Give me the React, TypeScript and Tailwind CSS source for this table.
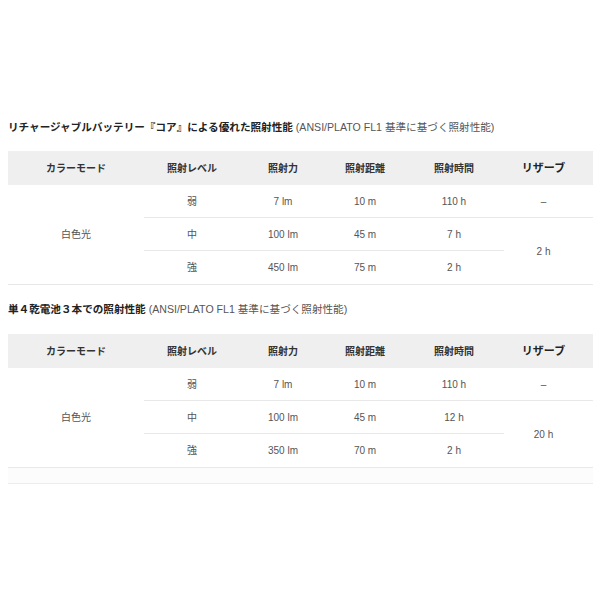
const font = "font-['Liberation_Sans','Noto_Sans_CJK_JP',sans-serif]";

type Row = { level: string; power: string; dist: string; time: string };

const widths = ["w-[136px]", "w-[96px]", "w-[86px]", "w-[78px]", "w-[100px]", "w-[89px]"];
const heads = ["カラーモード", "照射レベル", "照射力", "照射距離", "照射時間", "リザーブ"];

function SpecTable({ rows, reserve }: { rows: Row[]; reserve: string }) {
  return (
    <div className="w-[585px]">
      <div className="flex h-[34px] items-center bg-[#efefef] text-[10px] font-bold text-[#333]">
        {heads.map((h, i) => (
          <div key={h} className={`${widths[i]} text-center ${i === 5 ? "pr-[10px] text-[11px] text-[#222]" : ""}`}>
            {h}
          </div>
        ))}
      </div>
      <div className="flex border-b border-[#e8e8e8] text-[10px] text-[#555]">
        <div className="flex w-[136px] items-center justify-center">白色光</div>
        <div className="flex flex-col">
          {rows.map((r, i) => (
            <div
              key={r.level}
              className={`flex h-[33px] items-center ${
                i === 0 ? "w-[449px] border-b border-[#e8e8e8]" : i === 1 ? "w-[360px] border-b border-[#e8e8e8]" : "w-[360px]"
              }`}
            >
              <div className="w-[96px] text-center">{r.level}</div>
              <div className="w-[86px] text-center">{r.power}</div>
              <div className="w-[78px] text-center">{r.dist}</div>
              <div className="w-[100px] text-center">{r.time}</div>
              {i === 0 && <div className="w-[89px] pr-[10px] text-center">–</div>}
            </div>
          ))}
        </div>
        <div className="mt-[33px] -ml-[89px] flex w-[89px] items-center justify-center pr-[10px]">{reserve}</div>
      </div>
    </div>
  );
}

export default function App() {
  return (
    <div className={`${font} h-[600px] w-[600px] bg-white px-[8px] pt-[119px]`}>
      <h2 className="text-[10.6px] leading-[16px] font-bold text-[#222]">
        リチャージャブルバッテリー『コア』による優れた照射性能
        <span className="font-normal text-[#555]"> (ANSI/PLATO FL1 基準に基づく照射性能)</span>
      </h2>
      <div className="mt-[16px]">
        <SpecTable
          reserve="2 h"
          rows={[
            { level: "弱", power: "7 lm", dist: "10 m", time: "110 h" },
            { level: "中", power: "100 lm", dist: "45 m", time: "7 h" },
            { level: "強", power: "450 lm", dist: "75 m", time: "2 h" },
          ]}
        />
      </div>
      <h2 className="mt-[16px] text-[10.6px] leading-[16px] font-bold text-[#222]">
        単４乾電池３本での照射性能
        <span className="font-normal text-[#555]"> (ANSI/PLATO FL1 基準に基づく照射性能)</span>
      </h2>
      <div className="mt-[17px]">
        <SpecTable
          reserve="20 h"
          rows={[
            { level: "弱", power: "7 lm", dist: "10 m", time: "110 h" },
            { level: "中", power: "100 lm", dist: "45 m", time: "12 h" },
            { level: "強", power: "350 lm", dist: "70 m", time: "2 h" },
          ]}
        />
        <div className="h-[16px] w-[585px] border-b border-[#ececec] bg-[#fcfcfc]" />
      </div>
    </div>
  );
}
